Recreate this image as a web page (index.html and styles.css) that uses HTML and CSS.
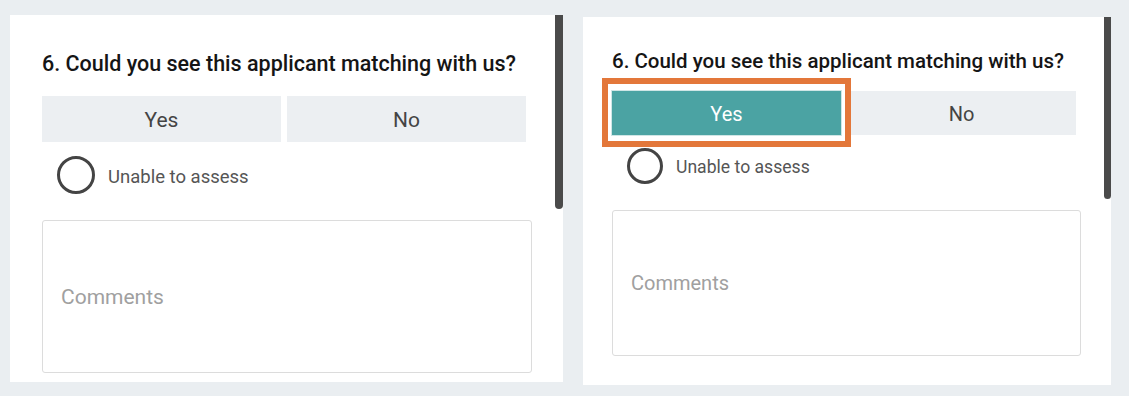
FILE: index.html
```html
<!DOCTYPE html>
<html lang="en">
<head>
<meta charset="utf-8">
<title>Question 6</title>
<link rel="stylesheet" href="styles.css">
</head>
<body>
<div class="stage">
  <section class="card card-a">
    <div class="scrollbar"></div>
    <h2 class="title">6. Could you see this applicant matching with us?</h2>
    <div class="choices">
      <div class="choice">Yes</div>
      <div class="choice">No</div>
    </div>
    <label class="radio-row">
      <span class="radio"></span>
      <span class="radio-label">Unable to assess</span>
    </label>
    <div class="comments"><span class="placeholder">Comments</span></div>
  </section>

  <section class="card card-b">
    <div class="scrollbar"></div>
    <h2 class="title">6. Could you see this applicant matching with us?</h2>
    <div class="choices">
      <div class="choice selected highlighted">Yes</div>
      <div class="choice">No</div>
    </div>
    <label class="radio-row">
      <span class="radio"></span>
      <span class="radio-label">Unable to assess</span>
    </label>
    <div class="comments"><span class="placeholder">Comments</span></div>
  </section>
</div>
</body>
</html>
```

FILE: styles.css
```css
* { box-sizing: border-box; }

html, body {
  margin: 0;
  padding: 0;
  background: #eaeef1;
  font-family: Roboto, "Liberation Sans", Arial, sans-serif;
}

.stage {
  display: flex;
  align-items: flex-start;
  gap: 20px;
  padding: 15px 0 0 10px;
}

.card {
  position: relative;
  background: #ffffff;
  display: flex;
  flex-direction: column;
}

.scrollbar {
  position: absolute;
  top: 0;
  right: 0;
  background: #4a4a4a;
  border-radius: 0 0 4px 4px;
}

.title {
  margin: 0;
  font-weight: 500;
  color: #151515;
  white-space: nowrap;
}

.choices {
  display: flex;
  gap: 6px;
}

.choice {
  flex: 1 1 0;
  display: flex;
  align-items: center;
  justify-content: center;
  padding-top: 2px;
  background: #eceff2;
  color: #444444;
}

.choice.selected {
  background: #4ba3a3;
  color: #ffffff;
  box-shadow: 0 0 0 1px #cfe6e6;
}

.highlighted {
  position: relative;
}

.highlighted::after {
  content: "";
  position: absolute;
  top: -13px;
  bottom: -12px;
  left: -10px;
  right: -10px;
  border: 6px solid #e3773a;
}

.radio-row {
  display: flex;
  align-items: center;
}

.radio {
  flex: none;
  border-radius: 50%;
  border: 3px solid #444444;
}

.radio-label {
  padding-top: 3px;
  color: #555555;
}

.comments {
  display: flex;
  align-items: center;
  border: 1px solid #dcdcdc;
  border-radius: 3px;
}

.placeholder {
  color: #a0a0a0;
}

/* ---- left card ---- */
.card-a {
  width: 553px;
  padding: 37px 31px 9px 32px;
}
.card-a .scrollbar { width: 8px; height: 194px; }
.card-a .title { font-size: 21.5px; line-height: 24px; }
.card-a .choices { margin-top: 20px; width: 484px; }
.card-a .choice { height: 46px; font-size: 21px; }
.card-a .radio-row { margin-top: 14px; padding-left: 15px; gap: 13px; }
.card-a .radio { width: 38px; height: 38px; }
.card-a .radio-label { font-size: 18.5px; line-height: 22px; }
.card-a .comments { margin-top: 26px; height: 153px; padding-left: 18px; }
.card-a .placeholder { font-size: 21px; }

/* ---- right card ---- */
.card-b {
  margin-top: 2px;
  width: 528px;
  padding: 33px 30px 29px 29px;
}
.card-b .scrollbar { width: 7px; height: 182px; }
.card-b .title { font-size: 20.5px; line-height: 23px; }
.card-b .choices { margin-top: 18px; width: 464px; }
.card-b .choice { height: 44px; font-size: 20px; }
.card-b .radio-row { margin-top: 13px; padding-left: 15px; gap: 13px; }
.card-b .radio { width: 36px; height: 36px; }
.card-b .radio-label { font-size: 17.6px; line-height: 21px; }
.card-b .comments { margin-top: 26px; height: 146px; padding-left: 18px; }
.card-b .placeholder { font-size: 20px; }
```
